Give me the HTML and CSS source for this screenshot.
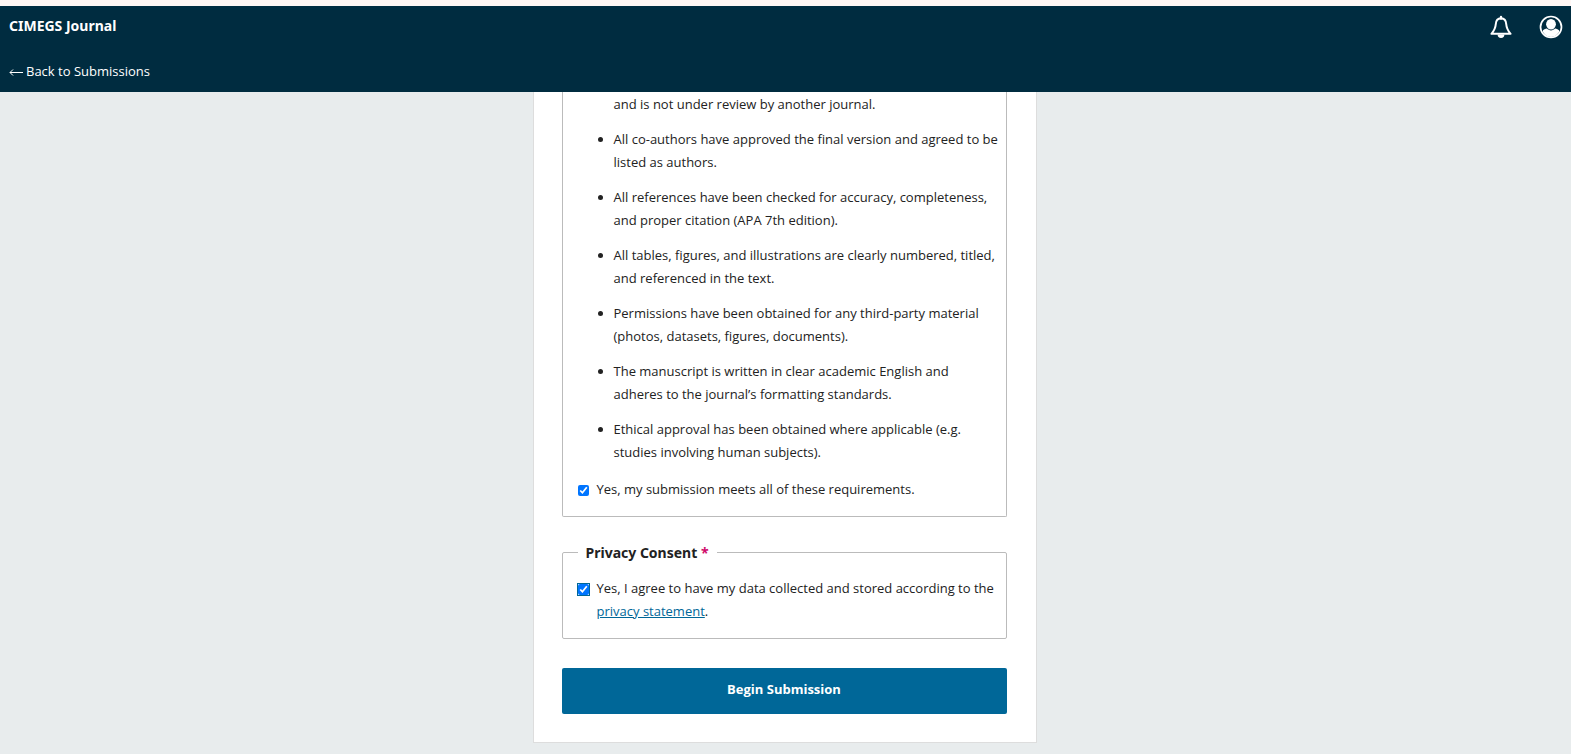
FILE: index.html
```html
<!DOCTYPE html>
<html lang="en">
<head>
<meta charset="utf-8">
<title>Make a Submission - CIMEGS Journal</title>
<meta name="viewport" content="width=device-width, initial-scale=1">
<link rel="stylesheet" href="styles.css">
</head>
<body>
<header class="app-header">
  <div class="header-row">
    <a class="journal-name" href="#">CIMEGS Journal</a>
    <div class="header-actions">
      <button class="icon-button" type="button" aria-label="Notifications">
        <svg class="icon" viewBox="0 0 24 24" fill="none" stroke="currentColor" stroke-width="2" stroke-linejoin="round">
          <path d="M12 3.2C8.8 3.4 7 5.6 6.8 9C6.5 13 5.4 15.5 2.4 18.8H21.6C18.6 15.5 17.5 13 17.2 9C17 5.6 15.2 3.4 12 3.2Z"/>
          <path d="M12 2V3.5" stroke-width="2.4" stroke-linecap="round"/>
          <path d="M8.6 19.6A3.4 3.4 0 0 0 15.4 19.6Z" fill="currentColor" stroke="none"/>
        </svg>
      </button>
      <button class="icon-button" type="button" aria-label="User menu">
        <svg class="icon" viewBox="0 0 24 24">
          <circle cx="12" cy="12" r="10.5" fill="none" stroke="currentColor" stroke-width="1.7"/>
          <ellipse cx="12" cy="9.3" rx="4.9" ry="5.3" fill="currentColor"/>
          <path d="M3.4 16.3C4.4 14.2 6.4 13.8 7.9 13.6C10.1 16 13.9 16 16.1 13.6C17.6 13.8 19.6 14.2 20.6 16.3C18.7 19.8 15.6 22 12 22S5.3 19.8 3.4 16.3Z" fill="currentColor"/>
        </svg>
      </button>
    </div>
  </div>
  <a class="back-link" href="#"><svg class="back-arrow" viewBox="0 0 14 8" fill="none" stroke="currentColor"><path d="M14 4.5H1M4 1.5L1 4.5L4 7.5"/></svg>Back to Submissions</a>
</header>
<main class="page">
  <form class="panel">
    <div class="group group-continued">
      <ul class="checklist">
        <li class="continued">and is not under review by another journal.</li>
        <li>All co-authors have approved the final version and agreed to be listed as authors.</li>
        <li>All references have been checked for accuracy, completeness, and proper citation (APA 7th edition).</li>
        <li>All tables, figures, and illustrations are clearly numbered, titled, and referenced in the text.</li>
        <li>Permissions have been obtained for any third-party material (photos, datasets, figures, documents).</li>
        <li>The manuscript is written in clear academic English and adheres to the journal’s formatting standards.</li>
        <li>Ethical approval has been obtained where applicable (e.g. studies involving human subjects).</li>
      </ul>
      <div class="option">
        <input class="check" type="checkbox" id="requirements" checked>
        <label for="requirements">Yes, my submission meets all of these requirements.</label>
      </div>
    </div>
    <fieldset class="group">
      <legend class="legend">Privacy Consent <span class="required">*</span></legend>
      <div class="option">
        <input class="check check-active" type="checkbox" id="privacy" checked>
        <label for="privacy">Yes, I agree to have my data collected and stored according to the <a class="link" href="#">privacy statement</a>.</label>
      </div>
    </fieldset>
    <button class="submit" type="button">Begin Submission</button>
  </form>
</main>
</body>
</html>
```

FILE: styles.css
```css
* {
  box-sizing: border-box;
}

body {
  margin: 0;
  min-height: 100vh;
  background: #e8eced;
  color: #222;
  font-family: "Open Sans", "Noto Sans", sans-serif;
  font-size: 13px;
  line-height: 23px;
}

.app-header {
  display: flex;
  flex-direction: column;
  gap: 20px;
  height: 92px;
  padding: 8px 8px 0 9px;
  border-top: 6px solid #fff6f4;
  background: #002c40;
  color: #fff;
}

.header-row {
  display: flex;
  align-items: center;
  justify-content: space-between;
  height: 26px;
}

.journal-name {
  align-self: flex-start;
  color: inherit;
  font-family: "Noto Sans", sans-serif;
  font-size: 14px;
  font-weight: 700;
  line-height: 24px;
  text-decoration: none;
}

.header-actions {
  display: flex;
  gap: 26px;
}

.icon-button {
  display: flex;
  padding: 0;
  border: 0;
  background: none;
  color: inherit;
}

.icon {
  width: 24px;
  height: 24px;
}

.back-link {
  display: flex;
  align-items: center;
  gap: 3px;
  align-self: flex-start;
  color: inherit;
  text-decoration: none;
}

.back-arrow {
  width: 14px;
  height: 8px;
}

.page {
  display: flex;
  justify-content: center;
  padding-right: 2px;
}

.panel {
  width: 100%;
  max-width: 504px;
  padding: 0 29px 28px 28px;
  border: 1px solid #ddd;
  border-top: 0;
  background: #fff;
}

.group {
  min-width: 0;
  margin: 0;
  padding: 13px 6px 15px 15px;
  border: 1px solid #bbb;
  border-radius: 2px;
}

.group-continued {
  margin-bottom: 24px;
  padding-top: 1px;
  border-top: 0;
  border-radius: 0 0 2px 2px;
}

.checklist {
  display: flex;
  flex-direction: column;
  gap: 12px;
  margin: 0 0 14px;
  padding: 0 0 0 36px;
}

.continued {
  list-style: none;
}

.option {
  display: flex;
  align-items: flex-start;
  gap: 8px;
}

.check {
  flex: none;
  width: 11px;
  height: 11px;
  margin: 7px 0 0;
}

.check-active {
  outline: 1px solid #006798;
  outline-offset: 0;
}

.legend {
  margin-left: 0;
  padding: 0 8px;
  font-family: "Noto Sans", sans-serif;
  font-size: 14px;
  font-weight: 700;
}

.required {
  color: #d00a6c;
}

.link {
  color: #006798;
}

.submit {
  display: block;
  width: 100%;
  height: 46px;
  margin-top: 29px;
  padding: 0 16px 3px;
  border: 0;
  border-radius: 2px;
  background: #006798;
  color: #fff;
  font: inherit;
  font-weight: 700;
}
```
